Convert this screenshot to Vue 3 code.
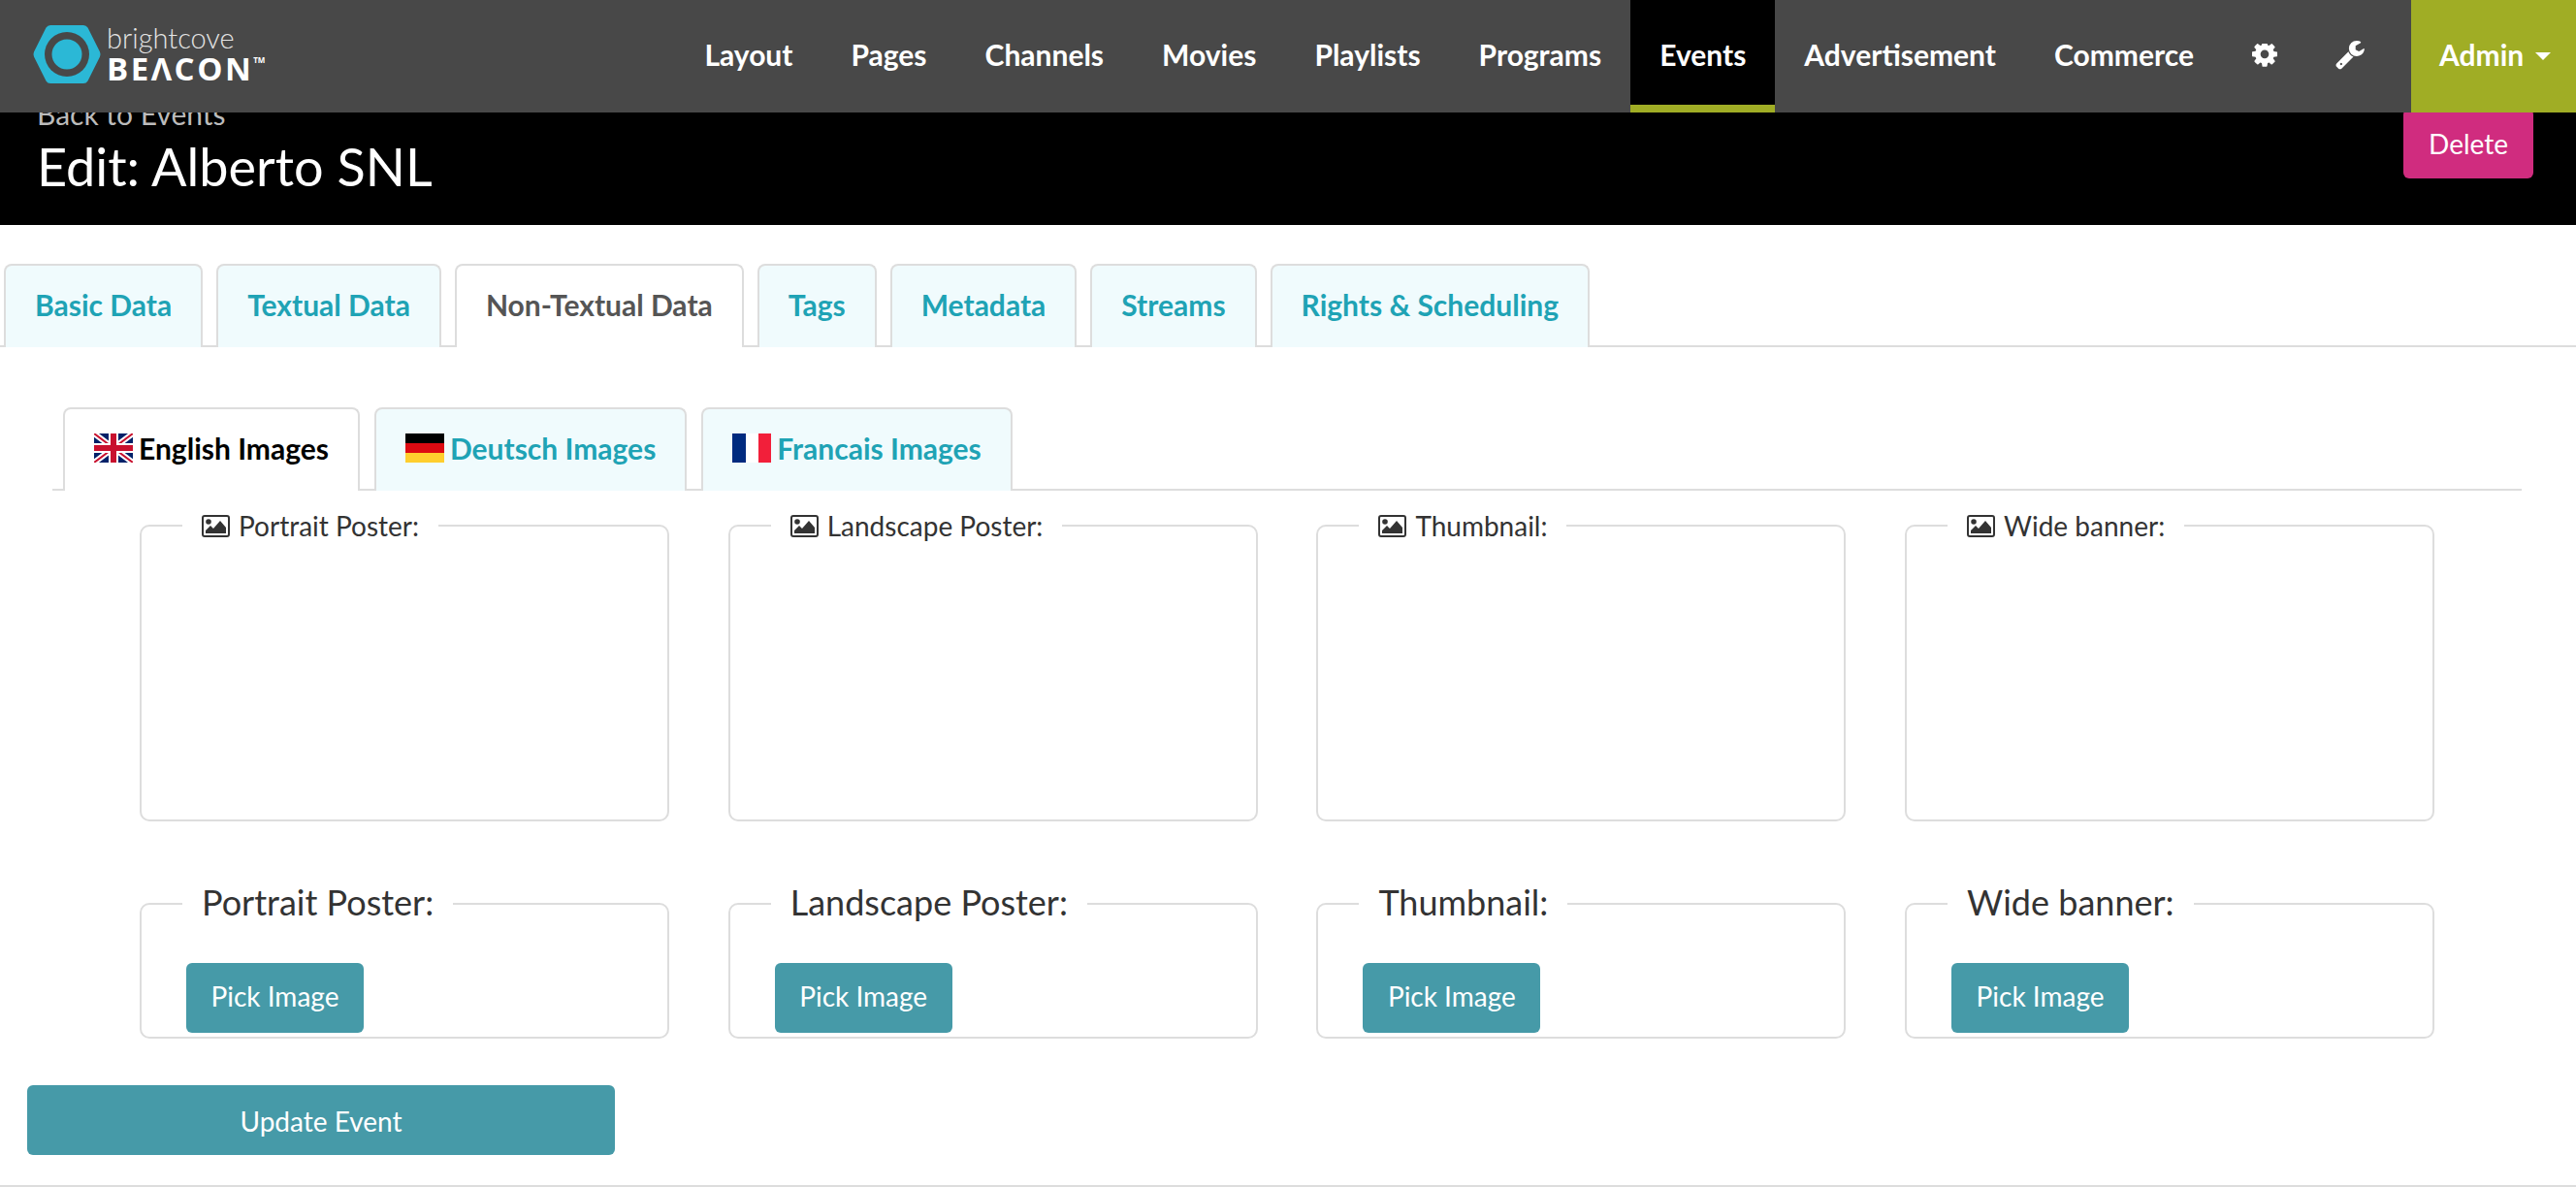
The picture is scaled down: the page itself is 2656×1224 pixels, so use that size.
<template>
  <div class="page">
    <nav class="topbar">
      <a class="logo">
        <svg class="logo-mark" viewBox="0 0 70 64" width="70" height="64">
          <path d="M18 2h34q3 0 4.500 2.600l12.500 25q1 2.400 0 4.800l-12.500 25q-1.500 2.600-4.500 2.600h-34q-3 0-4.500-2.600l-12.500-25q-1-2.400 0-4.800l12.500-25q1.500-2.600 4.500-2.600z" fill="#2bb8d6" />
          <circle cx="35" cy="32" r="23" fill="#484848" />
          <circle cx="35" cy="32" r="15.500" fill="#2bb8d6" />
        </svg>
        <span class="logo-text">
          <span class="logo-top">brightcove</span>
          <span class="logo-bottom">BEΛCON<sup>TM</sup></span>
        </span>
      </a>
      <ul class="menu">
        <li v-for="item in menu" :key="item" :class="{ active: item === 'Events' }">{{ item }}</li>
        <li class="icon-item">
          <svg viewBox="0 0 1536 1536" width="26" height="26"><path fill="#fff" :d="cogPath" /></svg>
        </li>
        <li class="icon-item">
          <svg viewBox="0 0 1664 1792" width="30" height="32"><path fill="#fff" :d="wrenchPath" /></svg>
        </li>
      </ul>
      <div class="admin">Admin <span class="caret"></span></div>
    </nav>

    <header class="hero">
      <div class="hero-title">
        <a class="back">Back to Events</a>
        <h1>Edit: Alberto SNL</h1>
      </div>
      <button class="delete">Delete</button>
    </header>

    <ul class="tabs">
      <li v-for="tab in tabs" :key="tab" :class="{ active: tab === 'Non-Textual Data' }">{{ tab }}</li>
    </ul>

    <section class="panel">
      <ul class="tabs lang-tabs">
        <li class="active">
          <svg class="flag" viewBox="0 0 40 30" width="40" height="30">
            <rect width="40" height="30" fill="#012169" />
            <path d="M0 0L40 30M40 0L0 30" stroke="#fff" stroke-width="6" />
            <path d="M0 0L40 30M40 0L0 30" stroke="#c8102e" stroke-width="2" />
            <path d="M20 0V30M0 15H40" stroke="#fff" stroke-width="10" />
            <path d="M20 0V30M0 15H40" stroke="#c8102e" stroke-width="6" />
          </svg>
          English Images
        </li>
        <li>
          <svg class="flag" viewBox="0 0 40 30" width="40" height="30">
            <rect width="40" height="10" fill="#000" />
            <rect y="10" width="40" height="10" fill="#dd0a12" />
            <rect y="20" width="40" height="10" fill="#ffce2e" />
          </svg>
          Deutsch Images
        </li>
        <li>
          <svg class="flag" viewBox="0 0 40 30" width="40" height="30">
            <rect width="14" height="30" fill="#002a7f" />
            <rect x="14" width="13" height="30" fill="#fff" />
            <rect x="27" width="13" height="30" fill="#f21f3a" />
          </svg>
          Francais Images
        </li>
      </ul>

      <div class="image-grid preview-grid">
        <fieldset v-for="name in images" :key="name" class="preview">
          <legend>
            <svg class="pic" viewBox="0 0 29 23" width="29" height="23">
              <rect x="1" y="1" width="27" height="21" rx="2" fill="none" stroke="#333" stroke-width="2" />
              <circle cx="7" cy="7" r="2.800" fill="#333" />
              <path d="M4 19v-3l5-5 3 3 7-8 6 7v6z" fill="#333" />
            </svg>
            {{ name }}:
          </legend>
          <div class="preview-box"></div>
        </fieldset>
      </div>

      <div class="image-grid picker-grid">
        <fieldset v-for="name in images" :key="name" class="picker">
          <legend>{{ name }}:</legend>
          <button class="btn">Pick Image</button>
        </fieldset>
      </div>
    </section>

    <button class="btn update">Update Event</button>
    <footer class="bottom"></footer>
  </div>
</template>

<script setup>
const menu = ['Layout', 'Pages', 'Channels', 'Movies', 'Playlists', 'Programs', 'Events', 'Advertisement', 'Commerce']
const tabs = ['Basic Data', 'Textual Data', 'Non-Textual Data', 'Tags', 'Metadata', 'Streams', 'Rights & Scheduling']
const images = ['Portrait Poster', 'Landscape Poster', 'Thumbnail', 'Wide banner']

const cogPath = 'M1024 640q0-106-75-181t-181-75-181 75-75 181 75 181 181 75 181-75 75-181zm512-109v222q0 12-8 23t-20 13l-185 28q-19 54-39 91 35 50 107 138 10 12 10 25t-9 23q-27 37-99 108t-94 71q-12 0-26-9l-138-108q-44 23-91 38-16 136-29 186-7 28-36 28h-222q-14 0-24.500-8.500t-11.500-21.500l-28-184q-49-16-90-37l-141 107q-10 9-25 9-14 0-25-11-126-114-165-168-7-10-7-23 0-12 8-23 15-21 51-66.500t54-70.500q-27-50-41-99l-183-27q-13-2-21-12.500t-8-23.500v-222q0-12 8-23t19-13l186-28q14-46 39-92-40-57-107-138-10-12-10-24 0-10 9-23 26-36 98.500-107.500t94.500-71.500q13 0 26 10l138 107q44-23 91-38 16-136 29-186 7-28 36-28h222q14 0 24.500 8.500t11.500 21.500l28 184q49 16 90 37l142-107q9-9 24-9 13 0 25 10 129 119 165 170 7 8 7 22 0 12-8 23-15 21-51 66.500t-54 70.500q26 50 41 98l183 28q13 2 21 12.500t8 23.500z'
const wrenchPath = 'M384 1344q0-26-19-45t-45-19-45 19-19 45 19 45 45 19 45-19 19-45zm644-420l-682 682q-37 37-90 37-52 0-91-37l-106-108q-38-36-38-90 0-53 38-91l681-681q39 98 114.500 173.500t173.500 114.500zm634-435q0 39-23 106-47 134-164.500 217.500t-258.500 83.500q-185 0-316.500-131.500t-131.500-316.500 131.500-316.500 316.500-131.500q58 0 121.500 16.500t107.500 46.500q16 11 16 28t-16 28l-293 169v224l193 107q5-3 79-48.500t135.500-81 70.500-35.500q15 0 23.500 10t8.500 25z'
</script>

<style>
html, body {
  margin: 0;
  background: #fff;
}
</style>

<style scoped>
.page {
  position: relative;
  height: 1224px;
  overflow: hidden;
  font-family: Lato, "Liberation Sans", sans-serif;
  font-size: 28px;
  color: #333;
}

.topbar {
  position: absolute;
  top: 0;
  left: 0;
  right: 0;
  z-index: 10;
  height: 116px;
  background: #484848;
  display: flex;
  align-items: stretch;
  color: #fff;
  font-size: 30px;
  font-weight: 700;
}
.logo {
  display: flex;
  align-items: center;
  gap: 6px;
  padding-left: 34px;
  height: 112px;
}
.logo-text {
  display: flex;
  flex-direction: column;
  line-height: 1;
}
.logo-top {
  font-weight: 300;
  font-size: 29px;
  line-height: 30px;
  color: #e4e4e4;
}
.logo-bottom {
  font-family: "Open Sans", Lato, sans-serif;
  font-weight: 700;
  font-size: 33px;
  line-height: 34px;
  letter-spacing: 2.500px;
}
.logo-bottom sup {
  font-size: 8px;
  vertical-align: 18px;
  line-height: 0;
  letter-spacing: 0;
}
.menu {
  list-style: none;
  margin: 0 18px 0 auto;
  padding: 0;
  display: flex;
}
.menu li {
  padding: 4px 30px 0;
  display: flex;
  align-items: center;
  box-sizing: border-box;
  height: 116px;
  border-bottom: 8px solid transparent;
}
.menu li.active {
  background: #000;
  border-bottom-color: #a0ad25;
}
.icon-item svg {
  margin-top: 4px;
}
.admin {
  background: #a0ad25;
  width: 170px;
  box-sizing: border-box;
  padding: 0 0 4px 29px;
  display: flex;
  align-items: center;
  gap: 12px;
}
.caret {
  width: 0;
  height: 0;
  border-left: 8px solid transparent;
  border-right: 8px solid transparent;
  border-top: 8px solid #fff;
  margin-top: 4px;
}

.hero {
  height: 232px;
  background: #000;
  display: flex;
  justify-content: space-between;
  align-items: flex-start;
  box-sizing: border-box;
  padding: 0 44px 0 38px;
}
.hero-title {
  padding-top: 100px;
}
.back {
  display: block;
  font-size: 30px;
  line-height: 34px;
  color: #bbb;
}
h1 {
  margin: 3px 0 0;
  font-size: 54px;
  line-height: 70px;
  font-weight: 400;
  color: #fff;
}
.delete {
  margin-top: 112px;
  width: 134px;
  height: 72px;
  border: 0;
  border-radius: 6px;
  background: #d02c7f;
  color: #fff;
  font: inherit;
}

.tabs {
  list-style: none;
  margin: 40px 0 0;
  padding: 0 0 0 4px;
  display: flex;
  gap: 14px;
  border-bottom: 2px solid #ddd;
}
.tabs li {
  margin-bottom: -2px;
  padding: 0 30px 4px;
  display: flex;
  align-items: center;
  box-sizing: border-box;
  height: 86px;
  background: #f0fbfd;
  border: 2px solid #ddd;
  border-bottom: 0;
  border-radius: 8px 8px 0 0;
  font-size: 30px;
  font-weight: 700;
  color: #1fa3b5;
}
.tabs li.active {
  background: #fff;
  color: #555;
  position: relative;
}
.panel {
  padding: 0 56px 0 54px;
}
.lang-tabs {
  margin-top: 62px;
  padding-left: 11px;
  gap: 15px;
}
.lang-tabs li {
  gap: 6px;
}
.lang-tabs li.active {
  color: #000;
}

.image-grid {
  display: grid;
  grid-template-columns: repeat(4, 546px);
  column-gap: 60.700px;
  margin-left: 90px;
}
fieldset {
  margin: 0;
  padding: 0;
  min-width: 0;
  border: 2px solid #ddd;
  border-radius: 10px;
}
legend {
  margin-left: 42px;
  padding: 0 20px;
}
.preview-grid {
  margin-top: 19px;
}
.preview legend {
  display: flex;
  align-items: center;
  gap: 9px;
  line-height: 34px;
}
.preview-box {
  height: 286px;
}
.picker-grid {
  margin-top: 62px;
}
.picker {
  padding-bottom: 4px;
}
.picker legend {
  font-size: 36px;
  line-height: 43px;
  padding-bottom: 3px;
}
.btn {
  display: block;
  height: 72px;
  border: 0;
  border-radius: 6px;
  background: #469aa8;
  color: #fff;
  font: inherit;
}
.picker .btn {
  width: 183px;
  margin: 38px 0 0 46px;
  padding-bottom: 5px;
}
.update {
  width: 606px;
  margin: 48px 0 0 28px;
  padding-top: 3px;
}
.bottom {
  position: absolute;
  left: 0;
  right: 0;
  bottom: 0;
  height: 2px;
  background: #ddd;
}
</style>
